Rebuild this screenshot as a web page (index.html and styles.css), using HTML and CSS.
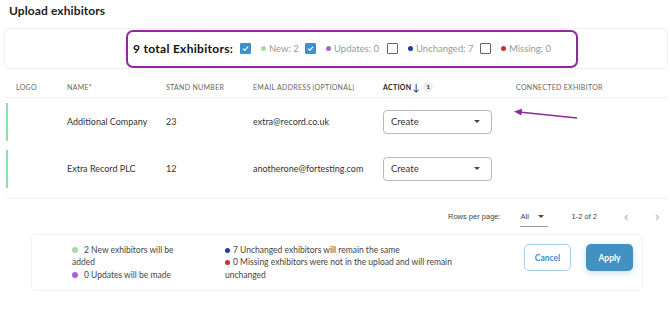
FILE: index.html
```html
<!DOCTYPE html>
<html lang="en">
<head>
  <meta charset="UTF-8" />
  <title>Upload exhibitors</title>
  <link rel="stylesheet" href="styles.css">
</head>
<body>
  <h1 class="page-title">Upload exhibitors</h1>

  <div class="filter-card">
    <div class="filter-box">
      <span class="filter-total">9 total Exhibitors:</span>
      <label class="filter-item item-new">
        <span class="check checked"><svg viewBox="0 0 12 12"><path d="M2.6 6.2 L5 8.5 L9.4 3.6" /></svg></span>
        <span class="dot dot-new"></span>New: 2
      </label>
      <label class="filter-item item-update">
        <span class="check checked"><svg viewBox="0 0 12 12"><path d="M2.6 6.2 L5 8.5 L9.4 3.6" /></svg></span>
        <span class="dot dot-update"></span>Updates: 0
      </label>
      <label class="filter-item item-same">
        <span class="check"></span>
        <span class="dot dot-same"></span>Unchanged: 7
      </label>
      <label class="filter-item">
        <span class="check"></span>
        <span class="dot dot-missing"></span>Missing: 0
      </label>
    </div>
  </div>

  <div class="table">
    <div class="row head">
      <div>Logo</div>
      <div>Name*</div>
      <div>Stand number</div>
      <div>Email address (optional)</div>
      <div class="sorted">Action <span class="sort-arrow">&#8595;</span> <span class="sort-badge">1</span></div>
      <div>Connected exhibitor</div>
    </div>
    <div class="row item">
      <div class="logo-cell"></div>
      <div>Additional Company</div>
      <div>23</div>
      <div>extra@record.co.uk</div>
      <div><div class="select">Create<span class="caret"></span></div></div>
      <div class="pointer-cell">
        <svg class="pointer" viewBox="0 0 70 14"><path d="M66 11 L8 5" /><path class="head-fill" d="M3 4.5 L11 1.8 L10.4 8.4 Z" /></svg>
      </div>
    </div>
    <div class="row item">
      <div class="logo-cell"></div>
      <div>Extra Record PLC</div>
      <div>12</div>
      <div>anotherone@fortesting.com</div>
      <div><div class="select">Create<span class="caret"></span></div></div>
      <div></div>
    </div>
  </div>

  <div class="pagination">
    <span>Rows per page:</span>
    <span class="rows-select">All<span class="caret"></span></span>
    <span class="range">1-2 of 2</span>
    <span class="page-btn">&#8249;</span>
    <span class="page-btn">&#8250;</span>
  </div>

  <div class="summary">
    <div class="summary-col first">
      <p><span class="dot dot-new big"></span>2 New exhibitors will be added</p>
      <p><span class="dot dot-update big"></span>0 Updates will be made</p>
    </div>
    <div class="summary-col second">
      <p><span class="dot dot-same"></span>7 Unchanged exhibitors will remain the same</p>
      <p><span class="dot dot-missing"></span>0 Missing exhibitors were not in the upload and will remain unchanged</p>
    </div>
    <div class="summary-actions">
      <button class="btn btn-outline">Cancel</button>
      <button class="btn btn-fill">Apply</button>
    </div>
  </div>
</body>
</html>
```

FILE: styles.css
```css
body {
  margin: 0;
  font-family: 'Lato', 'Noto Sans', sans-serif;
  color: #333;
  background: #fff;
}
.page-title {
  margin: 0;
  padding: 2px 9px 0;
  height: 26px;
  line-height: 18px;
  font-size: 12px;
  font-weight: 700;
  color: #222;
  letter-spacing: 0.1px;
}
.filter-card {
  margin: 0 2px 0 4px;
  height: 41px;
  box-sizing: border-box;
  border: 1px solid #f1f1f1;
  border-radius: 4px;
  display: flex;
  align-items: center;
  padding-left: 121px;
}
.filter-box {
  width: 452px;
  height: 38px;
  box-sizing: border-box;
  border: 2px solid #8e2a9e;
  border-radius: 7px;
  display: flex;
  align-items: center;
  padding-left: 5px;
  white-space: nowrap;
}
.filter-total {
  font-size: 12px;
  font-weight: 700;
  color: #111;
  letter-spacing: 0.3px;
  width: 107px;
  flex-shrink: 0;
}
.filter-item {
  display: flex;
  align-items: center;
  flex-shrink: 0;
  font-size: 9.5px;
  color: #999;
}
.item-new { width: 65px; }
.item-update { width: 82px; }
.item-same { width: 93px; }
.check {
  width: 11px;
  height: 11px;
  flex-shrink: 0;
  box-sizing: border-box;
  border: 1.5px solid #666;
  border-radius: 1px;
  margin-right: 10px;
  display: inline-flex;
}
.check.checked {
  background: #3f8fc8;
  border-color: #3f8fc8;
}
.check svg {
  width: 100%;
  height: 100%;
}
.check path {
  fill: none;
  stroke: #fff;
  stroke-width: 1.5;
}
.dot {
  width: 5px;
  height: 5px;
  border-radius: 50%;
  display: inline-block;
  margin-right: 3px;
  flex-shrink: 0;
}
.dot-new { background: #a8d8a8; }
.dot-update { background: #b060c8; }
.dot-same { background: #1c3f9a; }
.dot-missing { background: #c8322e; }

.table {
  margin: 7px 0 0 6px;
  width: 662px;
  border-bottom: 1px solid #f1f1f1;
  padding-bottom: 6px;
}
.row {
  display: grid;
  grid-template-columns: 61px 99px 87px 130px 133px 1fr;
  align-items: center;
  font-size: 9px;
}
.row.head {
  height: 21px;
  font-size: 7px;
  text-transform: uppercase;
  color: #666;
  letter-spacing: 0.3px;
  border-bottom: 1px solid #f1f1f1;
}
.row.head > div:first-child {
  padding-left: 10px;
}
.sorted {
  color: #222;
  font-weight: 700;
  display: flex;
  align-items: center;
}
.sort-arrow {
  font-size: 10px;
  font-weight: 400;
  margin: 0 3px 0 1px;
}
.sort-badge {
  width: 10px;
  height: 10px;
  border-radius: 50%;
  background: #eee;
  font-size: 6px;
  display: inline-flex;
  align-items: center;
  justify-content: center;
}
.row.item {
  height: 47px;
}
.logo-cell {
  height: 38px;
  border-left: 2px solid #8fe0a8;
}
.select {
  width: 109px;
  height: 24px;
  box-sizing: border-box;
  border: 1px solid #b8b8b8;
  border-radius: 4px;
  display: flex;
  align-items: center;
  justify-content: space-between;
  padding: 0 11px 0 7px;
  font-size: 9.5px;
  color: #333;
}
.caret {
  width: 0;
  height: 0;
  border-left: 3.5px solid transparent;
  border-right: 3.5px solid transparent;
  border-top: 3.5px solid #444;
}
.pointer-cell {
  position: relative;
  height: 47px;
}
.pointer {
  position: absolute;
  left: -5px;
  top: 9px;
  width: 70px;
  height: 14px;
}
.pointer path {
  fill: none;
  stroke: #8e2a9e;
  stroke-width: 1.6;
}
.pointer .head-fill {
  fill: #8e2a9e;
  stroke: none;
}

.pagination {
  height: 35px;
  display: flex;
  align-items: center;
  justify-content: flex-end;
  font-family: 'Liberation Sans', Arial, sans-serif;
  font-size: 7.5px;
  color: #444;
  padding-right: 11px;
}
.rows-select {
  display: inline-flex;
  align-items: center;
  width: 28px;
  height: 20px;
  box-sizing: border-box;
  border-bottom: 1px solid #999;
  margin-left: 19px;
  padding-left: 1px;
  gap: 9px;
  padding-top: 1px;
}
.range {
  margin-left: 24px;
}
.page-btn {
  font-size: 13px;
  color: #aaa;
  margin-left: 27px;
  width: 4px;
}
.summary {
  margin: 0 0 0 31px;
  width: 612px;
  height: 57px;
  box-sizing: border-box;
  border: 1px solid #f1f1f1;
  border-radius: 5px;
  display: flex;
  align-items: center;
  font-size: 8.5px;
  color: #444;
}
.summary p {
  margin: 0;
  line-height: 12.5px;
}
.summary-col.first {
  width: 113px;
  margin-left: 40px;
}
.summary-col.second {
  width: 250px;
  margin-left: 40px;
}
.dot.big {
  width: 6px;
  height: 6px;
  margin-right: 6px;
}
.summary-actions {
  margin-left: auto;
  margin-right: 9px;
  margin-bottom: 10px;
  display: flex;
  gap: 15px;
}
.btn {
  width: 47px;
  height: 27px;
  border-radius: 5px;
  font-family: inherit;
  font-size: 8.5px;
  font-weight: 700;
  cursor: pointer;
}
.btn-outline {
  background: #fff;
  color: #3f8fc8;
  border: 1px solid #a8cde6;
}
.btn-fill {
  background: #4191c2;
  color: #fff;
  border: none;
  box-shadow: 0 2px 6px rgba(65, 145, 194, 0.3);
}
```
